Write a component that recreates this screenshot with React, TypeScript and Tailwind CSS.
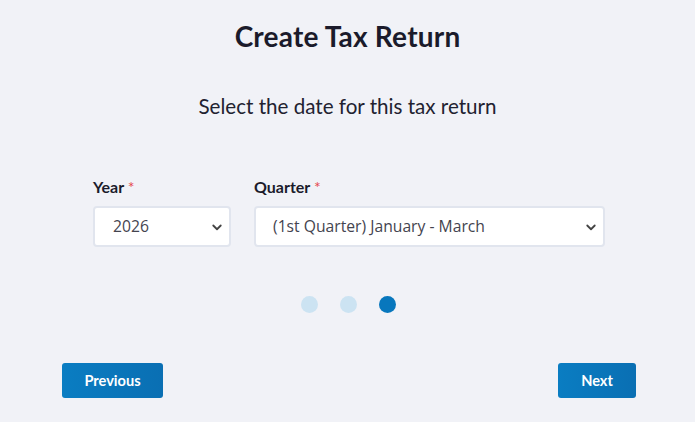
import React from "react";

function Chevron() {
  return (
    <svg width="12" height="12" viewBox="0 0 16 16" className="pointer-events-none absolute right-[8px] top-1/2 -translate-y-1/2 text-[#444]">
      <path d="M3 6l5 5 5-5" fill="none" stroke="currentColor" strokeWidth="2.4" strokeLinecap="round" strokeLinejoin="round" />
    </svg>
  );
}

export default function App() {
  return (
    <div className="w-[695px] h-[422px] bg-[#f1f2f7] flex flex-col items-center overflow-hidden" style={{ fontFamily: "Lato, 'Open Sans', sans-serif" }}>
      <h1 className="mt-[18px] h-[36px] text-[28px] leading-[36px] font-bold text-[#1b1b2b] tracking-[0.2px]">Create Tax Return</h1>
      <p className="mt-[38px] text-[20.6px] leading-[28px] text-[#222230]">Select the date for this tax return</p>
      <div className="mt-[57px] ml-[3px] flex gap-[23px] w-[512px]">
        <div className="flex flex-col w-[138px]">
          <label className="text-[16px] leading-[20px] font-bold text-[#1b1b2b]">Year <span className="text-[#e5484d] font-normal">*</span></label>
          <div className="relative mt-[9px]">
            <select defaultValue="2026" className="appearance-none w-full h-[41px] rounded-[4px] border-2 border-[#e1e5ee] bg-white pl-[18px] text-[15.7px] text-[#44444f] outline-none" style={{ fontFamily: "'Open Sans', sans-serif" }}>
              <option>2026</option>
            </select>
            <Chevron />
          </div>
        </div>
        <div className="flex flex-col w-[351px]">
          <label className="text-[16px] leading-[20px] font-bold text-[#1b1b2b]">Quarter <span className="text-[#e5484d] font-normal">*</span></label>
          <div className="relative mt-[9px]">
            <select defaultValue="q1" className="appearance-none w-full h-[41px] rounded-[4px] border-2 border-[#e1e5ee] bg-white pl-[17px] text-[15.7px] text-[#44444f] outline-none" style={{ fontFamily: "'Open Sans', sans-serif" }}>
              <option value="q1">(1st Quarter) January - March</option>
            </select>
            <Chevron />
          </div>
        </div>
      </div>
      <div className="mt-[49px] flex gap-[22px] items-center ml-[2px]">
        <span className="w-[17px] h-[17px] rounded-full bg-[#cce3f2]" />
        <span className="w-[17px] h-[17px] rounded-full bg-[#cce3f2]" />
        <span className="w-[17px] h-[17px] rounded-full bg-[#0877bd]" />
      </div>
      <div className="mt-[50px] w-[574px] ml-[3px] flex justify-between">
        <button className="w-[101px] h-[35px] rounded-[3px] bg-gradient-to-r from-[#0a7dc2] to-[#0a6fb3] text-white text-[14.6px] font-bold">Previous</button>
        <button className="w-[78px] h-[35px] rounded-[3px] bg-gradient-to-r from-[#0a7dc2] to-[#0a6fb3] text-white text-[14.6px] font-bold">Next</button>
      </div>
    </div>
  );
}
